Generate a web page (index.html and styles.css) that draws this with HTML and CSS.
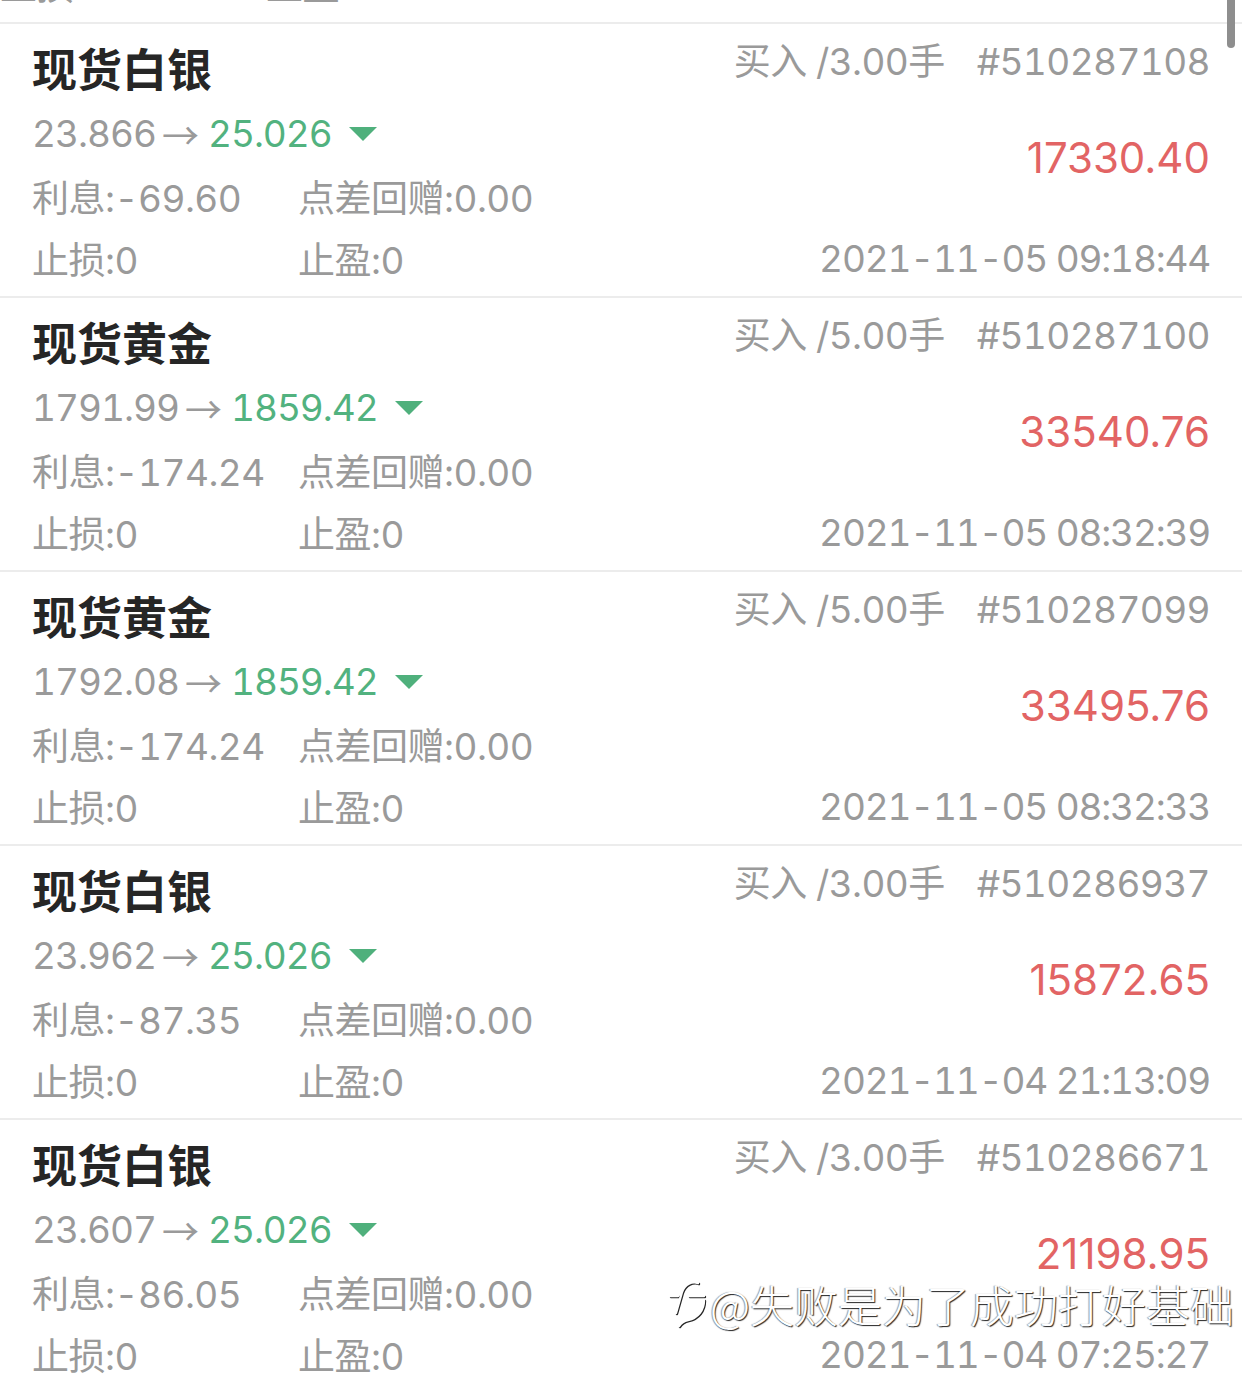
FILE: index.html
```html
<!DOCTYPE html>
<html lang="zh-CN">
<head>
  <meta charset="UTF-8">
  <title>持仓记录</title>
  <link rel="stylesheet" href="styles.css">
</head>
<body>
  <div class="scrollbar"></div>

  <div class="cortado">
    <div class="linea gris">
      <span class="col1">止损:0</span>
      <span>止盈:0</span>
    </div>
  </div>

  <div class="orden">
    <div class="izq">
      <div class="nombre">现货白银</div>
      <div class="precio gris">23.866<span class="flecha">→</span><span class="verde">25.026</span><span class="tri"></span></div>
      <div class="linea gris"><span class="col1">利息:-69.60</span><span>点差回赠:0.00</span></div>
      <div class="linea gris"><span class="col1">止损:0</span><span>止盈:0</span></div>
    </div>
    <div class="der">
      <div class="cabeza gris">买入 /3.00手<span class="num">#510287108</span></div>
      <div class="monto">17330.40</div>
      <div class="fecha gris">2021-11-05 09:18:44</div>
    </div>
  </div>

  <div class="orden">
    <div class="izq">
      <div class="nombre">现货黄金</div>
      <div class="precio gris">1791.99<span class="flecha">→</span><span class="verde">1859.42</span><span class="tri"></span></div>
      <div class="linea gris"><span class="col1">利息:-174.24</span><span>点差回赠:0.00</span></div>
      <div class="linea gris"><span class="col1">止损:0</span><span>止盈:0</span></div>
    </div>
    <div class="der">
      <div class="cabeza gris">买入 /5.00手<span class="num">#510287100</span></div>
      <div class="monto">33540.76</div>
      <div class="fecha gris">2021-11-05 08:32:39</div>
    </div>
  </div>

  <div class="orden">
    <div class="izq">
      <div class="nombre">现货黄金</div>
      <div class="precio gris">1792.08<span class="flecha">→</span><span class="verde">1859.42</span><span class="tri"></span></div>
      <div class="linea gris"><span class="col1">利息:-174.24</span><span>点差回赠:0.00</span></div>
      <div class="linea gris"><span class="col1">止损:0</span><span>止盈:0</span></div>
    </div>
    <div class="der">
      <div class="cabeza gris">买入 /5.00手<span class="num">#510287099</span></div>
      <div class="monto">33495.76</div>
      <div class="fecha gris">2021-11-05 08:32:33</div>
    </div>
  </div>

  <div class="orden">
    <div class="izq">
      <div class="nombre">现货白银</div>
      <div class="precio gris">23.962<span class="flecha">→</span><span class="verde">25.026</span><span class="tri"></span></div>
      <div class="linea gris"><span class="col1">利息:-87.35</span><span>点差回赠:0.00</span></div>
      <div class="linea gris"><span class="col1">止损:0</span><span>止盈:0</span></div>
    </div>
    <div class="der">
      <div class="cabeza gris">买入 /3.00手<span class="num">#510286937</span></div>
      <div class="monto">15872.65</div>
      <div class="fecha gris">2021-11-04 21:13:09</div>
    </div>
  </div>

  <div class="orden">
    <div class="izq">
      <div class="nombre">现货白银</div>
      <div class="precio gris">23.607<span class="flecha">→</span><span class="verde">25.026</span><span class="tri"></span></div>
      <div class="linea gris"><span class="col1">利息:-86.05</span><span>点差回赠:0.00</span></div>
      <div class="linea gris"><span class="col1">止损:0</span><span>止盈:0</span></div>
    </div>
    <div class="der">
      <div class="cabeza gris">买入 /3.00手<span class="num">#510286671</span></div>
      <div class="monto">21198.95</div>
      <div class="fecha gris">2021-11-04 07:25:27</div>
    </div>
  </div>

  <!-- marca de agua -->
  <div class="marca">
    <svg class="logo" width="40" height="48" viewBox="0 0 40 48">
      <path d="M30 3 C24 1 17 4 14 12 L8 33" fill="none" stroke="#fff" stroke-width="2.4" stroke-linecap="round"/>
      <path d="M2 16 L10 16" fill="none" stroke="#fff" stroke-width="2.4" stroke-linecap="round"/>
      <path d="M21 16 L36 16" fill="none" stroke="#fff" stroke-width="2.4" stroke-linecap="round"/>
      <path d="M36 20 C36 30 30 38 20 40 C16 41 13 43 11 46" fill="none" stroke="#fff" stroke-width="2.4" stroke-linecap="round"/>
    </svg>
    <span>@失败是为了成功打好基础</span>
  </div>
</body>
</html>
```

FILE: styles.css
```css
body {
  margin: 0;
  padding: 0;
  background-color: #fff;
  font-family: 'Inter', 'Noto Sans CJK SC', sans-serif;
  font-variant-numeric: tabular-nums;
  width: 1242px;
  height: 1375px;
  overflow: hidden;
  position: relative;
}

.gris {
  color: #9a9a9a;
}

.cortado {
  height: 22px;
  overflow: hidden;
  border-bottom: 2px solid #ececec;
}

.cortado .linea {
  margin-top: -44px;
}

.orden {
  display: flex;
  justify-content: space-between;
  height: 274px;
  padding: 12px 32px 0 32px;
  box-sizing: border-box;
  border-bottom: 2px solid #ececec;
}

.izq {
  display: flex;
  flex-direction: column;
}

.nombre {
  height: 64px;
  line-height: 64px;
  font-size: 45px;
  font-weight: bold;
  color: #262626;
  font-family: 'Noto Sans CJK SC', sans-serif;
}

.precio {
  height: 68px;
  line-height: 68px;
  font-size: 37px;
  letter-spacing: -1px;
  display: flex;
  align-items: center;
}

.flecha {
  margin: 0 10px 0 6px;
  font-family: 'Noto Sans CJK SC', sans-serif;
}

.verde {
  color: #52b27f;
}

.tri {
  width: 0;
  height: 0;
  margin-left: 17px;
  border-left: 14px solid transparent;
  border-right: 14px solid transparent;
  border-top: 14px solid #4fb07c;
}

.linea {
  height: 62px;
  line-height: 62px;
  font-size: 37px;
  letter-spacing: -0.5px;
  display: flex;
}

.col1 {
  width: 266px;
}

.der {
  display: flex;
  flex-direction: column;
  align-items: flex-end;
}

.cabeza {
  height: 52px;
  line-height: 52px;
  font-size: 37px;
  letter-spacing: -0.6px;
}

.cabeza .num {
  margin-left: 32px;
}

.monto {
  height: 140px;
  line-height: 140px;
  font-size: 42px;
  font-variant-numeric: normal;
  color: #e26464;
}

.fecha {
  height: 62px;
  line-height: 62px;
  font-size: 37px;
  letter-spacing: -1.2px;
}

.scrollbar {
  position: absolute;
  top: 0;
  right: 7px;
  width: 8px;
  height: 48px;
  border-radius: 0 0 4px 4px;
  background-color: #8e8e8e;
}

.marca {
  position: absolute;
  left: 668px;
  top: 1272px;
  display: flex;
  align-items: center;
  gap: 2px;
  font-family: 'Noto Sans CJK SC', sans-serif;
  font-weight: 300;
  font-size: 44px;
  color: #fff;
  text-shadow: 1px 1px 1px rgba(0, 0, 0, 0.85), -1px 0 1px rgba(0, 0, 0, 0.4);
}

.logo {
  filter: drop-shadow(1px 1px 0.5px rgba(0, 0, 0, 0.85));
}
```
